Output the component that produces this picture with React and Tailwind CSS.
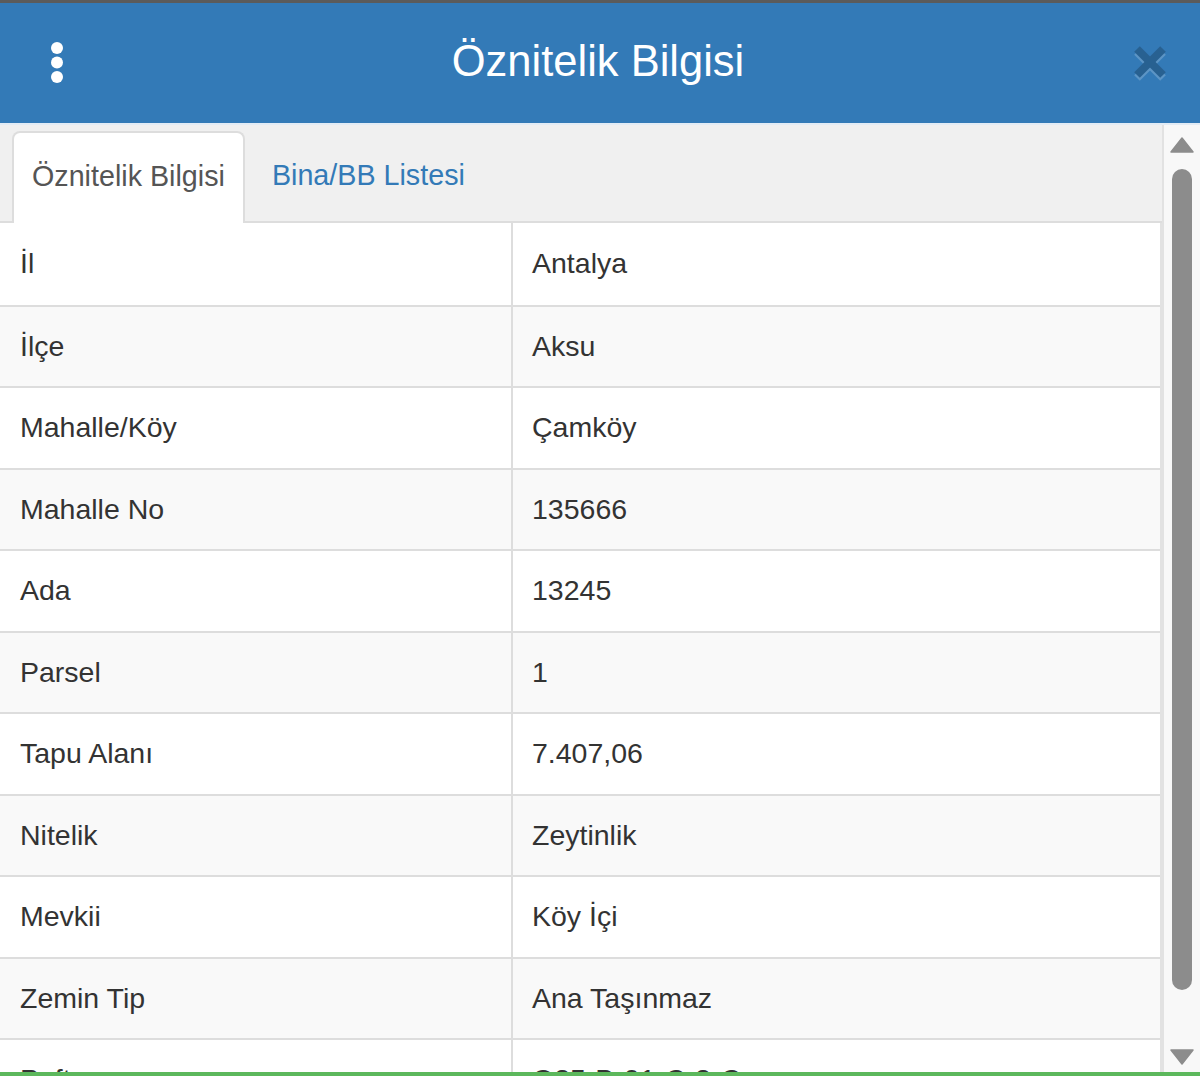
import React from 'react';

const rows = [
  ['İl', 'Antalya'],
  ['İlçe', 'Aksu'],
  ['Mahalle/Köy', 'Çamköy'],
  ['Mahalle No', '135666'],
  ['Ada', '13245'],
  ['Parsel', '1'],
  ['Tapu Alanı', '7.407,06'],
  ['Nitelik', 'Zeytinlik'],
  ['Mevkii', 'Köy İçi'],
  ['Zemin Tip', 'Ana Taşınmaz'],
  ['Pafta', 'O25-B-01-C-2-C'],
];

const Dots = () => (
  <svg width="14" height="44" viewBox="0 0 14 44">
    <circle cx="7" cy="7" r="6" fill="#fff" />
    <circle cx="7" cy="21.5" r="6" fill="#fff" />
    <circle cx="7" cy="36" r="6" fill="#fff" />
  </svg>
);

const CloseX = () => (
  <svg width="36" height="38" viewBox="0 0 36 38" className="opacity-20">
    <g stroke="#fff" strokeWidth="8" strokeLinecap="butt">
      <line x1="5" y1="7" x2="31" y2="33" />
      <line x1="31" y1="7" x2="5" y2="33" />
    </g>
    <g stroke="#000" strokeWidth="8" strokeLinecap="butt">
      <line x1="5" y1="4" x2="31" y2="30" />
      <line x1="31" y1="4" x2="5" y2="30" />
    </g>
  </svg>
);

const Scrollbar = () => (
  <div className="w-[38px] shrink-0 bg-[#f8f8f8] border-l-2 border-[#e2e2e2] flex flex-col items-center">
    <svg width="24" height="16" viewBox="0 0 24 16" className="mt-[12px]">
      <path d="M12 1 L23 15 L1 15 Z" fill="#8c8c8c" strokeLinejoin="round" stroke="#8c8c8c" strokeWidth="1.5" />
    </svg>
    <div className="mt-[16px] w-[20px] h-[821px] rounded-full bg-[#8c8c8c]" />
    <svg width="24" height="16" viewBox="0 0 24 16" className="mt-[59px]">
      <path d="M1 1 L23 1 L12 15 Z" fill="#8c8c8c" strokeLinejoin="round" stroke="#8c8c8c" strokeWidth="1.5" />
    </svg>
  </div>
);

export default function App() {
  return (
    <div className="w-[1200px] h-[1076px] flex flex-col overflow-hidden bg-white font-['Liberation_Sans',Arial,sans-serif]">
      <div className="h-[3px] shrink-0 bg-[#5b5b5b]" />

      {/* header */}
      <div className="h-[120px] shrink-0 bg-[#337ab7] flex items-center px-[50px]">
        <div className="w-[40px] flex">
          <Dots />
        </div>
        <h1 className="flex-1 text-center text-white text-[43.5px] leading-none pb-[2px] pr-[22px]">Öznitelik Bilgisi</h1>
        <div className="w-[40px] flex justify-end -mr-[18px] mt-[2px]">
          <CloseX />
        </div>
      </div>

      {/* body */}
      <div className="flex-1 min-h-0 flex border-t-2 border-[#e3ecf5]">
        <div className="flex-1 min-w-0 flex flex-col">
          <div className="h-[98px] shrink-0 bg-[#f0f0f0] flex items-end pl-[12px] border-b-2 border-[#dddddd]">
            <div className="h-[92px] -mb-[2px] px-[18px] pb-[2px] bg-white border-2 border-b-0 border-[#dddddd] rounded-t-[8px] flex items-center text-[28.7px] text-[#555555]">
              Öznitelik Bilgisi
            </div>
            <div className="h-[90px] px-[27px] flex items-center text-[28.7px] text-[#337ab7]">
              Bina/BB Listesi
            </div>
          </div>

          <div className="flex-1 min-h-0 overflow-hidden border-r-2 border-[#e2e2e2]">
            {rows.map(([k, v], i) => (
              <div
                key={k}
                className={`flex h-[81.5px] text-[28.5px] text-[#333333] ${i > 0 ? 'border-t-2 border-[#dddddd]' : 'h-[80px]'} ${i % 2 === 1 ? 'bg-[#f9f9f9]' : 'bg-white'}`}
              >
                <div className="w-[513px] shrink-0 pl-[20px] flex items-center border-r-2 border-[#dddddd]">{k}</div>
                <div className="flex-1 pl-[19px] flex items-center">{v}</div>
              </div>
            ))}
          </div>
        </div>
        <Scrollbar />
      </div>

      <div className="h-[4px] shrink-0 bg-[#5cb85c]" />
    </div>
  );
}
